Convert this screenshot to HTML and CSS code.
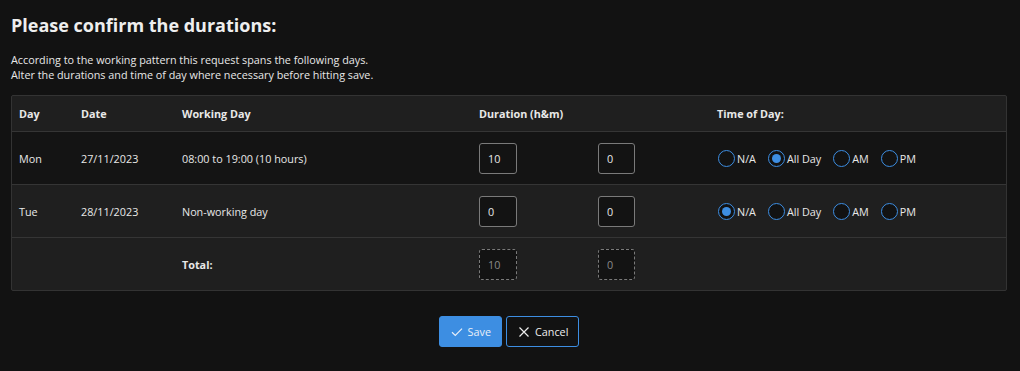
FILE: index.html
```html
<!DOCTYPE html>
<html lang="en">
<head>
<meta charset="utf-8">
<title>Confirm durations</title>
<link rel="stylesheet" href="styles.css">
</head>
<body>
<main class="page">
  <h1 class="title">Please confirm the durations:</h1>
  <p class="intro">According to the working pattern this request spans the following days.<br>Alter the durations and time of day where necessary before hitting save.</p>

  <div class="grid">
    <div class="row head">
      <div class="cell">Day</div>
      <div class="cell">Date</div>
      <div class="cell">Working Day</div>
      <div class="cell span2">Duration (h&amp;m)</div>
      <div class="cell">Time of Day:</div>
    </div>

    <div class="row dark">
      <div class="cell">Mon</div>
      <div class="cell">27/11/2023</div>
      <div class="cell">08:00 to 19:00 (10 hours)</div>
      <div class="cell"><input class="num" type="text" value="10"></div>
      <div class="cell"><input class="num" type="text" value="0"></div>
      <div class="cell radios">
        <label class="radio"><span class="dot"></span>N/A</label>
        <label class="radio"><span class="dot on"></span>All Day</label>
        <label class="radio"><span class="dot"></span>AM</label>
        <label class="radio"><span class="dot"></span>PM</label>
      </div>
    </div>

    <div class="row">
      <div class="cell">Tue</div>
      <div class="cell">28/11/2023</div>
      <div class="cell">Non-working day</div>
      <div class="cell"><input class="num" type="text" value="0"></div>
      <div class="cell"><input class="num" type="text" value="0"></div>
      <div class="cell radios">
        <label class="radio"><span class="dot on"></span>N/A</label>
        <label class="radio"><span class="dot"></span>All Day</label>
        <label class="radio"><span class="dot"></span>AM</label>
        <label class="radio"><span class="dot"></span>PM</label>
      </div>
    </div>

    <div class="row last">
      <div class="cell"></div>
      <div class="cell"></div>
      <div class="cell bold">Total:</div>
      <div class="cell"><input class="num total" type="text" value="10" readonly></div>
      <div class="cell"><input class="num total" type="text" value="0" readonly></div>
      <div class="cell"></div>
    </div>
  </div>

  <div class="actions">
    <button class="btn primary" type="button">
      <svg width="12" height="12" viewBox="0 0 12 12" aria-hidden="true"><path d="M1 6.2 L4.3 9.4 L11 2.6" fill="none" stroke="currentColor" stroke-width="1.2"/></svg>
      Save
    </button>
    <button class="btn outline" type="button">
      <svg width="12" height="12" viewBox="0 0 12 12" aria-hidden="true"><path d="M1.5 1.5 L10.5 10.5 M10.5 1.5 L1.5 10.5" fill="none" stroke="currentColor" stroke-width="1.2"/></svg>
      Cancel
    </button>
  </div>
</main>
</body>
</html>
```

FILE: styles.css
```css
* { box-sizing: border-box; }

html, body {
  margin: 0;
  background: #121212;
}

body {
  font-family: "Open Sans", "Noto Sans", sans-serif;
  color: #e8e8e8;
  font-size: 10.8px;
}

.page {
  padding: 0 13px 0 11px;
}

.title {
  margin: 0;
  padding-top: 13px;
  font-size: 18px;
  line-height: 24px;
  font-weight: 700;
  color: #eeeeee;
}

.intro {
  margin: 15px 0 0;
  line-height: 15px;
  font-size: 10.8px;
}

.grid {
  margin-top: 13px;
  border: 1px solid #333;
  border-radius: 2px;
  background: #1f1f1f;
}

.row {
  display: grid;
  grid-template-columns: 62px 101px 297px 119px 119px 1fr;
  align-items: center;
  height: 53px;
  border-top: 1px solid #353535;
}

.row.head {
  border-top: none;
  height: 35px;
  font-weight: 700;
}

.row.dark { background: #141414; }

.cell {
  padding: 0 7px;
  white-space: nowrap;
}

.span2 { grid-column: span 2; }

.bold { font-weight: 700; }

.num {
  display: block;
  width: 38px;
  height: 31px;
  background: #131313;
  border: 1px solid #7a7a7a;
  border-radius: 3px;
  color: #e8e8e8;
  font: inherit;
  padding: 0 0 0 8px;
  outline: none;
}

.cell:nth-child(5) .num { width: 37px; }

.num.total {
  border-style: dashed;
  color: #8a8a8a;
}

.radios {
  display: flex;
  align-items: center;
  padding-left: 8px;
}

.radio {
  display: flex;
  align-items: center;
  margin-right: 12px;
}

.dot {
  width: 17px;
  height: 17px;
  border: 1px solid #3d8ee2;
  border-radius: 50%;
  margin-right: 2px;
  display: flex;
  align-items: center;
  justify-content: center;
  background: #121212;
}

.dot.on::after {
  content: "";
  width: 9px;
  height: 9px;
  border-radius: 50%;
  background: #3d8ee2;
}

.actions {
  display: flex;
  justify-content: center;
  gap: 4px;
  margin-top: 25px;
}

.btn {
  display: flex;
  align-items: center;
  gap: 5px;
  height: 31px;
  padding: 0 10px 0 11px;
  border-radius: 3px;
  font: inherit;
  font-size: 10.8px;
  cursor: pointer;
}

.btn.primary {
  background: #3d8ee2;
  border: 1px solid #3d8ee2;
  color: #e8eef8;
}

.btn.outline {
  background: #121212;
  border: 1px solid #3d8ee2;
  color: #eeeeee;
}
```
